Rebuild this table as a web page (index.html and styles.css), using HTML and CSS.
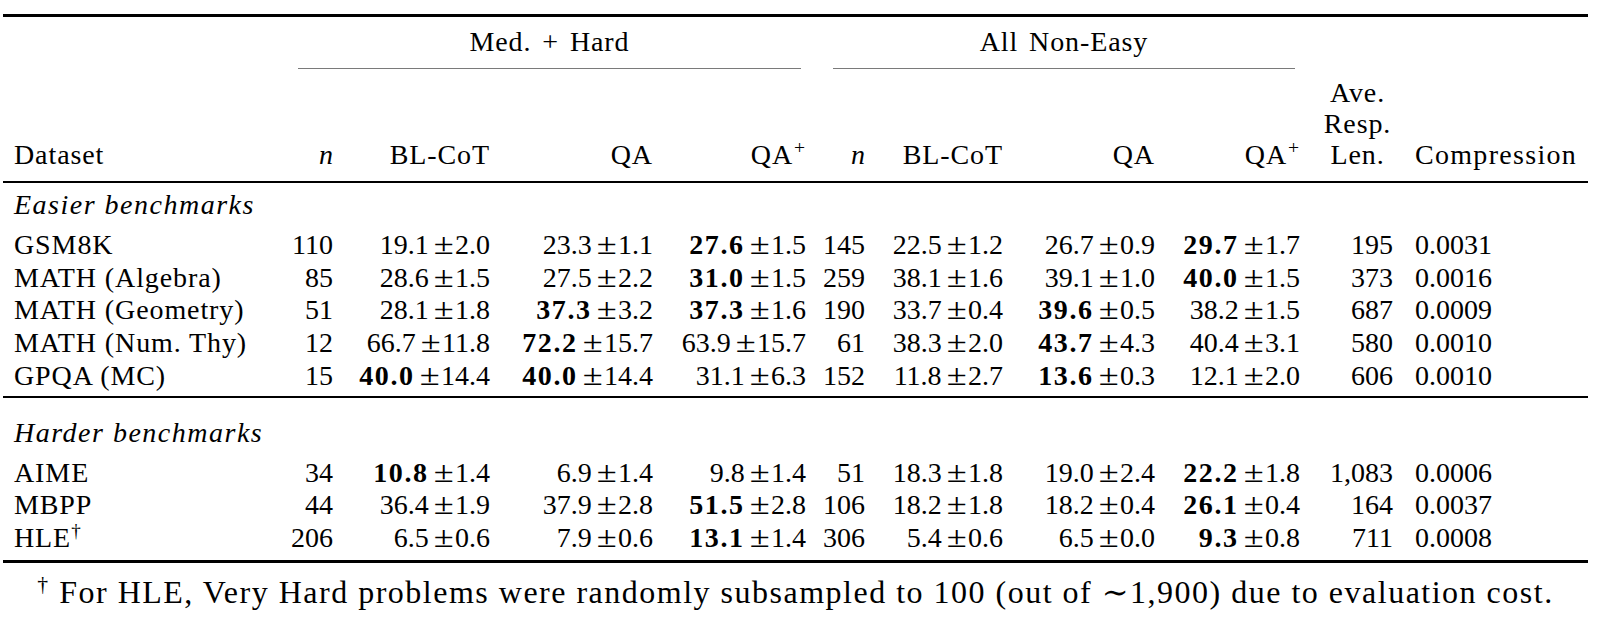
FILE: index.html
```html
<!DOCTYPE html>
<html lang="en">
<head>
<meta charset="utf-8">
<title>Benchmark results table</title>
<link rel="stylesheet" href="styles.css">
</head>
<body>
<div class="table">
  <div class="rule rule-heavy"></div>

  <div class="row row-group">
    <div class="cell"></div>
    <div class="cell group group-a">Med. + Hard</div>
    <div class="cell group group-b">All Non-Easy</div>
  </div>
  <div class="row row-cmid">
    <div class="cmid cmid-a"></div>
    <div class="cmid cmid-b"></div>
  </div>

  <div class="row row-head">
    <div class="cell cell-left label">Dataset</div>
    <div class="cell"><span class="var">n</span></div>
    <div class="cell label">BL-CoT</div>
    <div class="cell label">QA</div>
    <div class="cell label">QA<sup class="sup">+</sup></div>
    <div class="cell"><span class="var">n</span></div>
    <div class="cell label">BL-CoT</div>
    <div class="cell label">QA</div>
    <div class="cell label">QA<sup class="sup">+</sup></div>
    <div class="cell cell-center label"><span class="stack-line">Ave.</span><span class="stack-line">Resp.</span><span class="stack-line">Len.</span></div>
    <div class="cell cell-left label label-wide">Compression</div>
  </div>

  <div class="rule rule-mid"></div>

  <div class="row row-section">
    <div class="cell cell-left section">Easier benchmarks</div>
  </div>

  <div class="body">
    <div class="row">
      <div class="cell cell-left label">GSM8K</div>
      <div class="cell">110</div>
      <div class="cell">19.1<span class="pm">±</span>2.0</div>
      <div class="cell">23.3<span class="pm">±</span>1.1</div>
      <div class="cell"><b class="best">27.6</b><span class="pm">±</span>1.5</div>
      <div class="cell">145</div>
      <div class="cell">22.5<span class="pm">±</span>1.2</div>
      <div class="cell">26.7<span class="pm">±</span>0.9</div>
      <div class="cell"><b class="best">29.7</b><span class="pm">±</span>1.7</div>
      <div class="cell">195</div>
      <div class="cell cell-left">0.0031</div>
    </div>
    <div class="row">
      <div class="cell cell-left label">MATH (Algebra)</div>
      <div class="cell">85</div>
      <div class="cell">28.6<span class="pm">±</span>1.5</div>
      <div class="cell">27.5<span class="pm">±</span>2.2</div>
      <div class="cell"><b class="best">31.0</b><span class="pm">±</span>1.5</div>
      <div class="cell">259</div>
      <div class="cell">38.1<span class="pm">±</span>1.6</div>
      <div class="cell">39.1<span class="pm">±</span>1.0</div>
      <div class="cell"><b class="best">40.0</b><span class="pm">±</span>1.5</div>
      <div class="cell">373</div>
      <div class="cell cell-left">0.0016</div>
    </div>
    <div class="row">
      <div class="cell cell-left label">MATH (Geometry)</div>
      <div class="cell">51</div>
      <div class="cell">28.1<span class="pm">±</span>1.8</div>
      <div class="cell"><b class="best">37.3</b><span class="pm">±</span>3.2</div>
      <div class="cell"><b class="best">37.3</b><span class="pm">±</span>1.6</div>
      <div class="cell">190</div>
      <div class="cell">33.7<span class="pm">±</span>0.4</div>
      <div class="cell"><b class="best">39.6</b><span class="pm">±</span>0.5</div>
      <div class="cell">38.2<span class="pm">±</span>1.5</div>
      <div class="cell">687</div>
      <div class="cell cell-left">0.0009</div>
    </div>
    <div class="row">
      <div class="cell cell-left label">MATH (Num. Thy)</div>
      <div class="cell">12</div>
      <div class="cell">66.7<span class="pm">±</span>11.8</div>
      <div class="cell"><b class="best">72.2</b><span class="pm">±</span>15.7</div>
      <div class="cell">63.9<span class="pm">±</span>15.7</div>
      <div class="cell">61</div>
      <div class="cell">38.3<span class="pm">±</span>2.0</div>
      <div class="cell"><b class="best">43.7</b><span class="pm">±</span>4.3</div>
      <div class="cell">40.4<span class="pm">±</span>3.1</div>
      <div class="cell">580</div>
      <div class="cell cell-left">0.0010</div>
    </div>
    <div class="row">
      <div class="cell cell-left label">GPQA (MC)</div>
      <div class="cell">15</div>
      <div class="cell"><b class="best">40.0</b><span class="pm">±</span>14.4</div>
      <div class="cell"><b class="best">40.0</b><span class="pm">±</span>14.4</div>
      <div class="cell">31.1<span class="pm">±</span>6.3</div>
      <div class="cell">152</div>
      <div class="cell">11.8<span class="pm">±</span>2.7</div>
      <div class="cell"><b class="best">13.6</b><span class="pm">±</span>0.3</div>
      <div class="cell">12.1<span class="pm">±</span>2.0</div>
      <div class="cell">606</div>
      <div class="cell cell-left">0.0010</div>
    </div>
  </div>

  <div class="rule rule-mid rule-section"></div>

  <div class="row row-section row-section-2">
    <div class="cell cell-left section">Harder benchmarks</div>
  </div>

  <div class="body">
    <div class="row">
      <div class="cell cell-left label">AIME</div>
      <div class="cell">34</div>
      <div class="cell"><b class="best">10.8</b><span class="pm">±</span>1.4</div>
      <div class="cell">6.9<span class="pm">±</span>1.4</div>
      <div class="cell">9.8<span class="pm">±</span>1.4</div>
      <div class="cell">51</div>
      <div class="cell">18.3<span class="pm">±</span>1.8</div>
      <div class="cell">19.0<span class="pm">±</span>2.4</div>
      <div class="cell"><b class="best">22.2</b><span class="pm">±</span>1.8</div>
      <div class="cell">1,083</div>
      <div class="cell cell-left">0.0006</div>
    </div>
    <div class="row">
      <div class="cell cell-left label">MBPP</div>
      <div class="cell">44</div>
      <div class="cell">36.4<span class="pm">±</span>1.9</div>
      <div class="cell">37.9<span class="pm">±</span>2.8</div>
      <div class="cell"><b class="best">51.5</b><span class="pm">±</span>2.8</div>
      <div class="cell">106</div>
      <div class="cell">18.2<span class="pm">±</span>1.8</div>
      <div class="cell">18.2<span class="pm">±</span>0.4</div>
      <div class="cell"><b class="best">26.1</b><span class="pm">±</span>0.4</div>
      <div class="cell">164</div>
      <div class="cell cell-left">0.0037</div>
    </div>
    <div class="row">
      <div class="cell cell-left label">HLE<sup class="dag">†</sup></div>
      <div class="cell">206</div>
      <div class="cell">6.5<span class="pm">±</span>0.6</div>
      <div class="cell">7.9<span class="pm">±</span>0.6</div>
      <div class="cell"><b class="best">13.1</b><span class="pm">±</span>1.4</div>
      <div class="cell">306</div>
      <div class="cell">5.4<span class="pm">±</span>0.6</div>
      <div class="cell">6.5<span class="pm">±</span>0.0</div>
      <div class="cell"><b class="best">9.3</b><span class="pm">±</span>0.8</div>
      <div class="cell">711</div>
      <div class="cell cell-left">0.0008</div>
    </div>
  </div>

  <div class="rule rule-heavy rule-bottom"></div>

  <p class="note"><sup class="dag">†</sup> For HLE, Very Hard problems were randomly subsampled to 100 (out of ∼1,900) due to evaluation cost.</p>
</div>
</body>
</html>
```

FILE: styles.css
```css
html, body {
  margin: 0;
  padding: 0;
  background: #ffffff;
}

body {
  font-family: "Liberation Serif", "DejaVu Serif", serif;
  font-size: 28px;
  color: #000000;
}

.table {
  width: 1585px;
  margin: 14px 0 0 3px;
}

/* booktabs-like rules */
.rule {
  background: #000000;
}
.rule-heavy {
  height: 3px;
}
.rule-mid {
  height: 2px;
  margin-top: 11px;
}
.rule-section {
  margin-top: 3px;
}
.rule-bottom {
  margin-top: 5px;
}

/* shared column grid */
.row {
  display: grid;
  grid-template-columns: 279px 62px 157px 163px 153px 59px 138px 152px 145px 93px 184px;
  line-height: 33px;
}

.cell {
  padding: 0 11px 0 0;
  white-space: nowrap;
  text-align: right;
  justify-self: end;
}
.cell-left {
  padding: 0 0 0 11px;
  text-align: left;
  justify-self: start;
}
.cell-center {
  padding: 0 11px;
  text-align: center;
  justify-self: stretch;
}

.label {
  letter-spacing: 0.9px;
}
.label-wide {
  letter-spacing: 1.3px;
}

/* group headings */
.row-group {
  margin-top: 8px;
}
.group {
  padding: 0;
  justify-self: stretch;
  text-align: center;
  letter-spacing: 0.9px;
  word-spacing: 3px;
}
.group-a {
  grid-column: 2 / 6;
}
.group-b {
  grid-column: 6 / 10;
}

.row-cmid {
  margin-top: 10px;
  line-height: 0;
}
.cmid {
  height: 1px;
  background: #7a7a7a;
  margin: 0 16px;
}
.cmid-a {
  grid-column: 2 / 6;
}
.cmid-b {
  grid-column: 6 / 10;
}

/* column headings */
.row-head {
  margin-top: 8px;
  line-height: 31px;
}
.row-head .cell {
  align-self: end;
}
.stack-line {
  display: block;
  line-height: 31px;
}
.var {
  font-style: italic;
}
.sup {
  font-size: 0.7em;
  line-height: 0;
  vertical-align: 0.5em;
  margin-left: 1px;
}

/* section headings */
.row-section {
  margin-top: 5px;
}
.row-section-2 {
  margin-top: 18px;
}
.section {
  font-style: italic;
  letter-spacing: 1.5px;
  grid-column: 1 / 6;
}

.body {
  margin-top: 8px;
}
.body .row {
  line-height: 32.7px;
}

.pm {
  display: inline-block;
  transform: scale(1.3, 1.04);
  margin: 0 4px 0 7px;
}
.best {
  font-weight: 700;
  letter-spacing: 1.6px;
}

.dag {
  font-size: 0.68em;
  line-height: 0;
  vertical-align: 0.55em;
}

.note {
  margin: 11px 0 0;
  text-align: center;
  font-size: 32px;
  line-height: 36px;
  letter-spacing: 1.5px;
  white-space: nowrap;
}
```
